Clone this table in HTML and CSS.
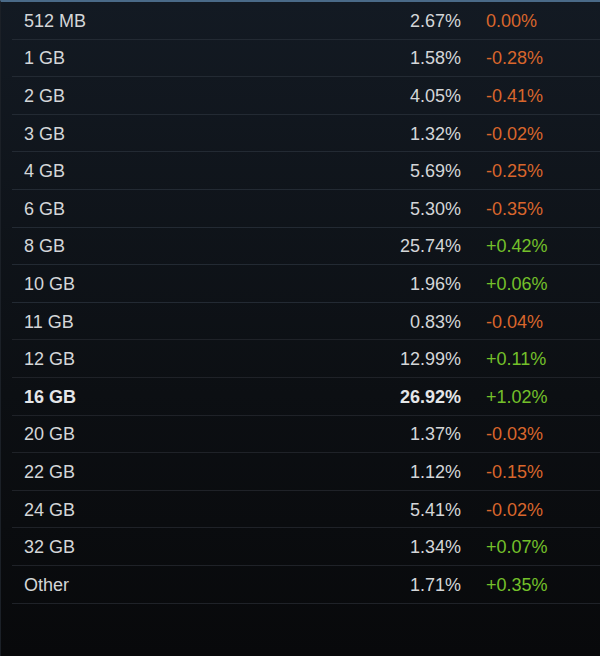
FILE: index.html
```html
<!DOCTYPE html>
<html>
<head>
<meta charset="utf-8">
<link rel="stylesheet" href="styles.css">
</head>
<body>
<div class="panel">
  <div class="row"><span class="label">512 MB</span><span class="pct">2.67%</span><span class="chg down">0.00%</span></div>
  <div class="row"><span class="label">1 GB</span><span class="pct">1.58%</span><span class="chg down">-0.28%</span></div>
  <div class="row"><span class="label">2 GB</span><span class="pct">4.05%</span><span class="chg down">-0.41%</span></div>
  <div class="row"><span class="label">3 GB</span><span class="pct">1.32%</span><span class="chg down">-0.02%</span></div>
  <div class="row"><span class="label">4 GB</span><span class="pct">5.69%</span><span class="chg down">-0.25%</span></div>
  <div class="row"><span class="label">6 GB</span><span class="pct">5.30%</span><span class="chg down">-0.35%</span></div>
  <div class="row"><span class="label">8 GB</span><span class="pct">25.74%</span><span class="chg up">+0.42%</span></div>
  <div class="row"><span class="label">10 GB</span><span class="pct">1.96%</span><span class="chg up">+0.06%</span></div>
  <div class="row"><span class="label">11 GB</span><span class="pct">0.83%</span><span class="chg down">-0.04%</span></div>
  <div class="row"><span class="label">12 GB</span><span class="pct">12.99%</span><span class="chg up">+0.11%</span></div>
  <div class="row bold"><span class="label">16 GB</span><span class="pct">26.92%</span><span class="chg up">+1.02%</span></div>
  <div class="row"><span class="label">20 GB</span><span class="pct">1.37%</span><span class="chg down">-0.03%</span></div>
  <div class="row"><span class="label">22 GB</span><span class="pct">1.12%</span><span class="chg down">-0.15%</span></div>
  <div class="row"><span class="label">24 GB</span><span class="pct">5.41%</span><span class="chg down">-0.02%</span></div>
  <div class="row"><span class="label">32 GB</span><span class="pct">1.34%</span><span class="chg up">+0.07%</span></div>
  <div class="row"><span class="label">Other</span><span class="pct">1.71%</span><span class="chg up">+0.35%</span></div>
</div>
</body>
</html>
```
FILE: styles.css
```css
html, body {
  margin: 0;
  padding: 0;
  width: 600px;
  height: 656px;
  overflow: hidden;
}
body {
  background: linear-gradient(to bottom, #131a23 0%, #0c0f13 60%, #08090b 100%);
  font-family: "Liberation Sans", Arial, sans-serif;
  font-size: 18px;
  color: #d4d6d8;
}
.panel {
  box-sizing: border-box;
  height: 656px;
  border-top: 2px solid #4a6a88;
  border-left: 1px solid #1b2027;
  padding-left: 11px;
}
.row {
  box-sizing: border-box;
  display: flex;
  align-items: center;
  height: 37.6px;
  padding-top: 2px;
  border-bottom: 1px solid #232a33;
}
.row:nth-child(n+9) {
  border-bottom-color: #1f2228;
}
.label {
  flex: 1;
  padding-left: 12px;
}
.pct {
  text-align: right;
}
.chg {
  width: 114px;
  padding-left: 25px;
}
.down { color: #d9662c; }
.up { color: #74c02a; }
.bold .label, .bold .pct { font-weight: bold; color: #e4e6e8; }
```
